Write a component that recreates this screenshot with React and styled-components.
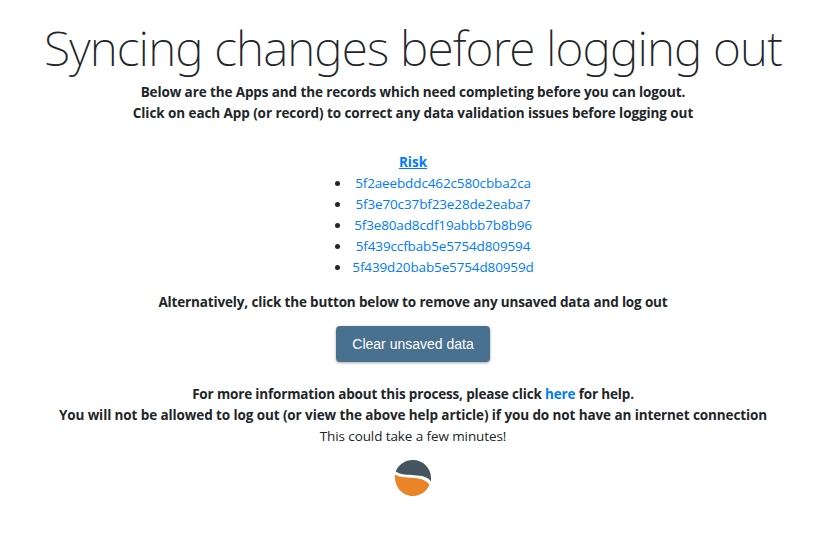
import React from "react";
import styled, { createGlobalStyle } from "styled-components";

const GlobalStyle = createGlobalStyle`
  *,
  *::before,
  *::after {
    box-sizing: border-box;
  }
  body {
    margin: 0;
    background: #fff;
    color: #212529;
    font-family: "Segoe UI", "Open Sans", "Noto Sans", sans-serif;
    font-size: 14px;
    line-height: 21px;
  }
`;

const Page = styled.main`
  display: flex;
  flex-direction: column;
  align-items: center;
  padding: 19px 0 0 3px;
  text-align: center;
  white-space: nowrap;
`;

const Title = styled.h1`
  margin: 0 0 5px;
  font-family: "Segoe UI", "Noto Sans", sans-serif;
  font-size: 48px;
  font-weight: 200;
  line-height: 58px;
  letter-spacing: -0.88px;
`;

const Line = styled.div`
  font-size: 13.5px;
  font-weight: ${({ $light }) => ($light ? 400 : 700)};
  letter-spacing: ${({ $spacing }) => $spacing || "-0.1px"};
`;

const Link = styled.a`
  color: #007bff;
  text-decoration: none;
`;

const AppLink = styled(Link)`
  margin-top: 28px;
  font-weight: 700;
  font-size: 13.5px;
  text-decoration: underline;
`;

const RecordList = styled.ul`
  margin: 0 0 14px;
  padding: 0 0 0 59px;
  font-size: 13.5px;
  letter-spacing: -0.13px;
`;

const RecordLink = styled(Link)`
  margin-left: 1px;
`;

const ClearButton = styled.button`
  width: 154px;
  height: 36px;
  margin: 13px 0 22px;
  padding: 0;
  border: 0;
  border-radius: 4px;
  background: #4a708f;
  box-shadow: 0 1px 3px rgba(0, 0, 0, 0.35);
  color: #fff;
  font-family: Arial, "Liberation Sans", sans-serif;
  font-size: 14px;
`;

const Logo = styled.svg`
  display: block;
  margin-top: 12px;
`;

const records = [
  "5f2aeebddc462c580cbba2ca",
  "5f3e70c37bf23e28de2eaba7",
  "5f3e80ad8cdf19abbb7b8b96",
  "5f439ccfbab5e5754d809594",
  "5f439d20bab5e5754d80959d",
];

const App = () => {
  return (
    <>
      <GlobalStyle />
      <Page>
        <Title>Syncing changes before logging out</Title>
        <Line $spacing="-0.11px">
          Below are the Apps and the records which need completing before you
          can logout.
        </Line>
        <Line $spacing="-0.08px">
          Click on each App (or record) to correct any data validation issues
          before logging out
        </Line>
        <AppLink href="#">Risk</AppLink>
        <RecordList>
          {records.map((id) => (
            <li key={id}>
              <RecordLink href="#">{id}</RecordLink>
            </li>
          ))}
        </RecordList>
        <Line $spacing="-0.15px">
          Alternatively, click the button below to remove any unsaved data and
          log out
        </Line>
        <ClearButton type="button">Clear unsaved data</ClearButton>
        <Line $spacing="-0.16px">
          For more information about this process, please click{" "}
          <Link href="#">here</Link> for help.
        </Line>
        <Line>
          You will not be allowed to log out (or view the above help article) if
          you do not have an internet connection
        </Line>
        <Line $light>This could take a few minutes!</Line>
        <Logo width="38" height="38" viewBox="0 0 38 38" aria-hidden="true">
          <path
            d="M1.7 12.5C4.5 5.500 11 1 19 1C29 1 37 9 37 19V22.500C31 12.500 11 19 1.700 12.500Z"
            fill="#455560"
          />
          <path
            d="M1 15.500C10 21.500 27 15 35.500 25.500C33 32 27 37 19 37C8.500 37 0 28 1 15.500Z"
            fill="#e98427"
          />
        </Logo>
      </Page>
    </>
  );
};

export default App;
